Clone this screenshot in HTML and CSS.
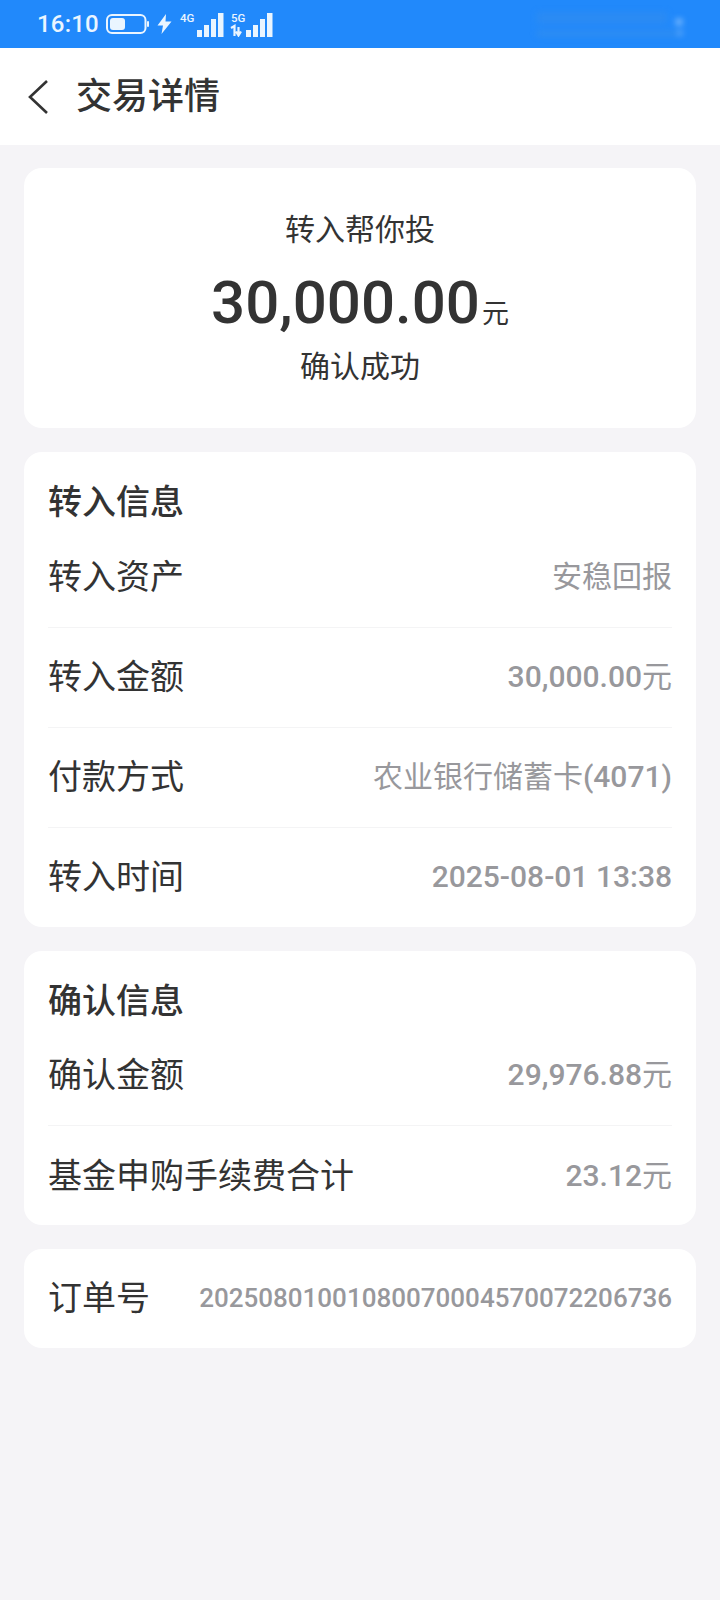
FILE: index.html
```html
<!DOCTYPE html>
<html lang="zh-CN">
<head>
<meta charset="utf-8">
<title>交易详情</title>
<link rel="stylesheet" href="styles.css">
</head>
<body>
<div class="status">
  <span class="time">16:10</span>
  <svg class="battery" width="44" height="20" viewBox="0 0 44 20"><rect x="1" y="1" width="38.5" height="18" rx="5" fill="none" stroke="#eaf5ff" stroke-width="2"/><rect x="4" y="4" width="15" height="12" rx="3" fill="#eaf5ff"/><rect x="41" y="7" width="2" height="6" rx="1" fill="#eaf5ff"/></svg>
  <svg class="bolt" width="15" height="20" viewBox="0 0 15 20"><path d="M9 0 L0.5 11.5 H6 L4.5 20 L14.5 7.5 H8.5 Z" fill="#eaf5ff"/></svg>
  <span class="signal sig4">
    <span class="net">4G</span>
    <svg width="28" height="24" viewBox="0 0 28 24"><rect x="0" y="17" width="5" height="7" fill="#eaf5ff"/><rect x="7" y="12" width="5" height="12" fill="#eaf5ff"/><rect x="14" y="6" width="5" height="18" fill="#eaf5ff"/><rect x="21" y="0" width="5.5" height="24" fill="#eaf5ff"/></svg>
  </span>
  <span class="signal sig5">
    <span class="net">5G</span>
    <svg width="44" height="24" viewBox="0 0 44 24"><path d="M1 15 L4.5 13 V23 M8.5 14 V22 M6 18.5 L8.5 22.5 L11 18.5" fill="none" stroke="#eaf5ff" stroke-width="2.2"/><rect x="16" y="17" width="5" height="7" fill="#eaf5ff"/><rect x="23" y="12" width="5" height="12" fill="#eaf5ff"/><rect x="30" y="6" width="5" height="18" fill="#eaf5ff"/><rect x="37" y="0" width="5.5" height="24" fill="#eaf5ff"/></svg>
  </span>
  <div class="smudge"><span class="smudge-a"></span><span class="smudge-b"></span><span class="smudge-dot"></span><span class="smudge-dot2"></span></div>
</div>

<header class="topbar">
  <svg class="back" width="24" height="36" viewBox="0 0 24 36"><path d="M21 2 L4 18 L21 34" fill="none" stroke="#333" stroke-width="2.6"/></svg>
  <h1 class="page-title">交易详情</h1>
</header>

<main class="content">
  <section class="card summary">
    <div class="summary-type">转入帮你投</div>
    <div class="summary-amount"><span class="big">30,000.00</span><span class="unit">元</span></div>
    <div class="summary-state">确认成功</div>
  </section>

  <section class="card">
    <h2 class="card-title">转入信息</h2>
    <div class="row"><span class="label">转入资产</span><span class="value">安稳回报</span></div>
    <div class="row"><span class="label">转入金额</span><span class="value"><b>30,000.00</b>元</span></div>
    <div class="row"><span class="label">付款方式</span><span class="value">农业银行储蓄卡<b>(4071)</b></span></div>
    <div class="row"><span class="label">转入时间</span><span class="value"><b>2025-08-01 13:38</b></span></div>
  </section>

  <section class="card">
    <h2 class="card-title">确认信息</h2>
    <div class="row"><span class="label">确认金额</span><span class="value"><b>29,976.88</b>元</span></div>
    <div class="row"><span class="label">基金申购手续费合计</span><span class="value"><b>23.12</b>元</span></div>
  </section>

  <section class="card order">
    <span class="label">订单号</span><span class="value order-no"><b>20250801001080070004570072206736</b></span>
  </section>
</main>
</body>
</html>
```
FILE: styles.css
```css
* { box-sizing: border-box; }
html, body { margin: 0; padding: 0; }
body {
  width: 720px;
  height: 1600px;
  overflow: hidden;
  background: #f5f4f7;
  color: #333;
  font-family: Roboto, "Noto Sans CJK SC", sans-serif;
}
.status {
  height: 48px;
  background: #2189fb;
  display: flex;
  align-items: center;
  padding-left: 37px;
  color: #eaf5ff;
}
.time { font-size: 24px; font-weight: 500; width: 69px; letter-spacing: 0.2px; }
.bolt { margin-left: 7px; }
.signal { position: relative; display: flex; align-items: flex-end; height: 24px; margin-top: 2px; }
.sig4 { margin-left: 25px; }
.sig5 { margin-left: 5px; width: 44px; }
.net {
  position: absolute;
  top: 0;
  font-size: 11.5px;
  font-weight: 500;
  line-height: 10px;
}
.sig4 .net { left: -17px; }
.sig5 .net { left: 1px; }
.smudge { position: relative; margin-left: auto; margin-right: 38px; width: 145px; height: 26px; filter: blur(3px); }
.smudge-a { position: absolute; left: 0; top: 1px; width: 130px; height: 12px; background: #3a8ee8; opacity: .4; }
.smudge-b { position: absolute; left: 0; top: 20px; width: 142px; height: 5px; background: #3f92e6; opacity: .5; }
.smudge-dot { position: absolute; right: 0; top: 8px; width: 6px; height: 6px; border-radius: 50%; background: #a9d3ff; }
.smudge-dot2 { position: absolute; right: 0; top: 20px; width: 4px; height: 4px; border-radius: 50%; background: #a9d3ff; }

.topbar {
  height: 97px;
  background: #fff;
  display: flex;
  align-items: center;
  padding-left: 26px;
}
.back { flex: none; }
.page-title {
  margin: 0 0 0 26px;
  font-size: 36px;
  font-weight: 500;
  line-height: 44px;
  color: #333;
}

.content {
  padding: 23px 24px 0;
  display: flex;
  flex-direction: column;
  gap: 24px;
}
.card {
  background: #fff;
  border-radius: 18px;
  padding: 0 24px;
}
.summary {
  height: 260px;
  display: flex;
  flex-direction: column;
  align-items: center;
  padding-top: 40px;
}
.summary-type { font-size: 30px; line-height: 44px; }
.summary-amount { display: flex; align-items: baseline; margin-top: 15px; line-height: 72px; }
.big { font-size: 60px; font-weight: 500; color: #333; }
.unit { font-size: 27px; margin-left: 2px; }
.summary-state { font-size: 30px; line-height: 44px; margin-top: -5px; }

.card-title {
  margin: 0;
  height: 74.5px;
  padding-top: 25px;
  font-size: 34px;
  font-weight: 500;
  line-height: 50px;
  color: #333;
}
.row {
  height: 100px;
  display: flex;
  align-items: center;
  justify-content: space-between;
}
.row + .row { border-top: 1px solid #f4f4f5; }
.label { font-size: 34px; line-height: 44px; color: #333; }
.value { font-size: 30px; line-height: 44px; color: #98989c; white-space: nowrap; }
.value b { font-weight: 500; }
.order {
  height: 99px;
  margin-top: -0.5px;
  display: flex;
  align-items: center;
  justify-content: space-between;
}
.order-no { font-size: 26px; }
```
